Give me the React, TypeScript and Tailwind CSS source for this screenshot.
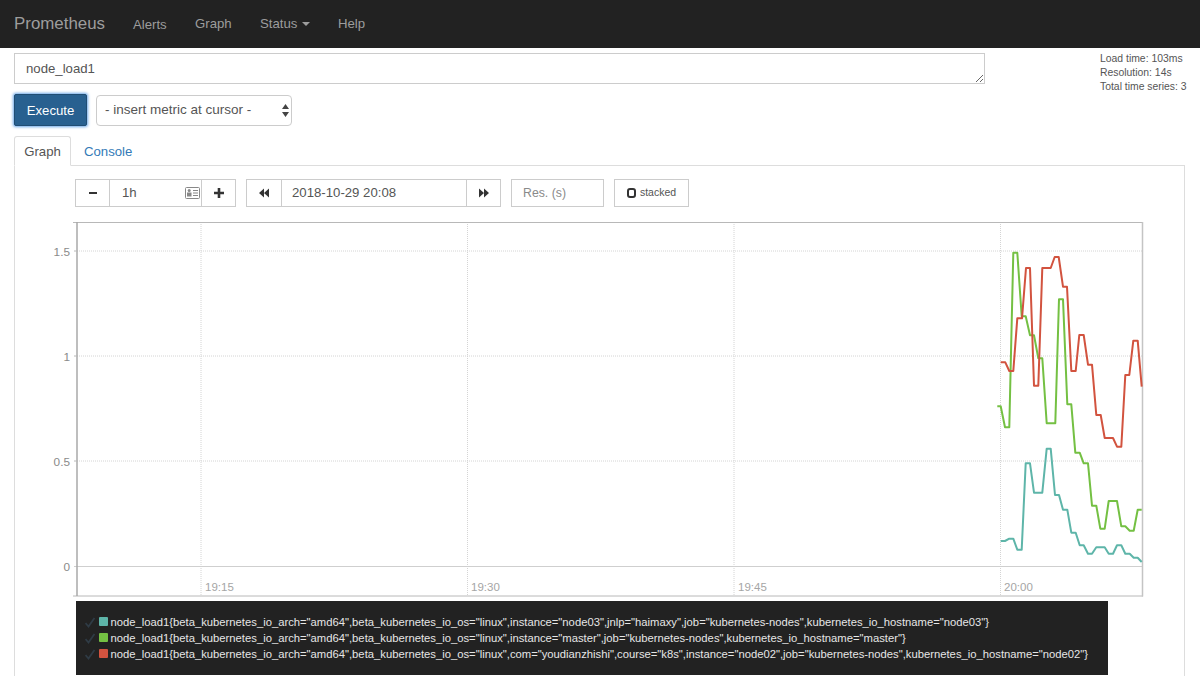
import React from "react";

const red = "1000.7,362.3 1005.3,362.3 1009.3,371 1013.3,371 1017.3,318.3 1022,318.3 1026,268 1030,268 1034,385.7 1038.3,385.7 1042.3,268 1050.7,268 1054.7,257 1058.7,257 1063,286.7 1067,286.7 1071.3,371 1075.7,371 1079.3,335 1083.7,335 1088,364.7 1092,364.7 1096.3,415 1100.7,415 1104.7,438 1113,438 1117,446.7 1121.3,446.7 1125.3,375 1129.3,375 1133.3,340.7 1137.7,340.7 1141.7,386.7";
const green = "997.3,406.3 1000.7,406.3 1005,427.3 1009.3,427.3 1013.3,252.7 1017.3,252.7 1021.7,316.3 1025.7,316.3 1030,335.3 1034,335.3 1038.3,358.3 1042.3,358.3 1046.7,423.3 1055.3,423.3 1059,299.3 1063,299.3 1067.3,404.3 1071.3,404.3 1075.3,452.7 1079.7,452.7 1083.7,463.3 1088,463.3 1092,505.7 1096.3,505.7 1100.3,528.7 1104.7,528.7 1108.7,501 1117,501 1121.3,526.3 1125.3,526.3 1129.7,530.7 1133.7,530.7 1137.7,509.7 1141.7,509.7";
const teal = "1000.7,541 1005,541 1009.3,538.7 1013.3,538.7 1017.3,549.7 1021.7,549.7 1025.7,463.3 1030,463.3 1034,492.7 1042.3,492.7 1046.7,448.7 1050.7,448.7 1055,495 1059,495 1063,509.7 1067.3,509.7 1071.3,532.7 1075.7,532.7 1079.7,545.3 1083.7,545.3 1088,553.7 1092,553.7 1096.3,547.3 1104.7,547.3 1108.7,553.7 1113,553.7 1117,545.3 1121.3,545.3 1125.3,553.7 1129.7,553.7 1133.7,557.7 1137.7,557.7 1141.7,562";

const FONT = { fontFamily: '"Liberation Sans", Arial, sans-serif' };

function Chart() {
  const vx = [201, 467.5, 734, 1000.5];
  const hy: [number, string][] = [
    [251, "1.5"],
    [356, "1"],
    [461, "0.5"],
  ];
  const xl: [number, string][] = [
    [205, "19:15"],
    [471, "19:30"],
    [738, "19:45"],
    [1004, "20:00"],
  ];
  return (
    <svg viewBox="44 214 1110 386" width="1110" height="386" className="block ml-[29px] mt-[7px]" style={FONT}>
      {vx.map((x) => (
        <line key={x} x1={x} x2={x} y1={222} y2={596} stroke="#d4d4d4" strokeWidth="1" strokeDasharray="1 1" />
      ))}
      {hy.map(([y]) => (
        <line key={y} x1={77} x2={1142} y1={y} y2={y} stroke="#d4d4d4" strokeWidth="1" strokeDasharray="1 1" />
      ))}
      <line x1="74" x2="1142" y1="566.5" y2="566.5" stroke="#cfcfcf" strokeWidth="1" />
      <line x1="73" x2="1142" y1="222.5" y2="222.5" stroke="#b8b8b8" strokeWidth="1" />
      <line x1="73" x2="1143" y1="596" y2="596" stroke="#b8b8b8" strokeWidth="1" />
      <line x1="77" x2="77" y1="222" y2="596" stroke="#a8a8a8" strokeWidth="1.5" />
      <line x1="1142.5" x2="1142.5" y1="222" y2="596.5" stroke="#c4c4c4" strokeWidth="1.5" />
      {hy.map(([y]) => (
        <line key={"t" + y} x1={74} x2={77} y1={y} y2={y} stroke="#b8b8b8" />
      ))}
      {hy.map(([y, l]) => (
        <text key={l} x={70} y={y + 4.5} textAnchor="end" fontSize="11.8" fill="#8a8a8a">{l}</text>
      ))}
      <text x={70} y={571} textAnchor="end" fontSize="11.8" fill="#8a8a8a">0</text>
      {xl.map(([x, l]) => (
        <text key={l} x={x} y={591} fontSize="11.5" fill="#a5a5a5">{l}</text>
      ))}
      <polyline points={teal} fill="none" stroke="#5eb5a9" strokeWidth="2" strokeLinejoin="round" />
      <polyline points={green} fill="none" stroke="#74c043" strokeWidth="2" strokeLinejoin="round" />
      <polyline points={red} fill="none" stroke="#d2533f" strokeWidth="2" strokeLinejoin="round" />
    </svg>
  );
}

function Btn({ w, children }: { w: string; children: React.ReactNode }) {
  return (
    <div className={`${w} h-full flex items-center justify-center border border-[#ccc] bg-white text-[#333] -ml-px first:ml-0`}>
      {children}
    </div>
  );
}

function Rows({ color, text }: { color: string; text: string }) {
  return (
    <div className="flex items-center h-[16px] whitespace-nowrap">
      <svg width="10" height="11" viewBox="0 0 10 11" className="mr-[4px] shrink-0">
        <path d="M0.5 6 L3.5 9.5 L9.5 1" fill="none" stroke="#2f3b45" strokeWidth="1.8" />
      </svg>
      <span className={`${color} w-[9px] h-[9px] rounded-[1px] mr-[2.5px] shrink-0 -mt-[2px]`} />
      <span>{text}</span>
    </div>
  );
}

export default function App() {
  return (
    <div className="h-[676px] w-[1200px] overflow-hidden bg-white flex flex-col text-[#555]" style={FONT}>
      <nav className="h-12 shrink-0 bg-[#222] flex items-center text-[#9d9d9d] text-[13.2px] pl-[14px]">
        <span className="text-[16.9px] w-[119px]">Prometheus</span>
        <span className="w-[62px] pt-px">Alerts</span>
        <span className="w-[65px]">Graph</span>
        <span className="w-[78px] flex items-center">
          Status
          <span className="ml-[5px] w-0 h-0 border-x-[4px] border-x-transparent border-t-[4px] border-t-[#9d9d9d]" />
        </span>
        <span>Help</span>
      </nav>

      <main className="flex-1 flex flex-col px-[14px] pt-[5px] min-h-0">
        <div className="flex h-[31px]">
          <textarea
            defaultValue="node_load1"
            className="w-[971px] shrink-0 h-[31px] px-[11px] py-[5px] border border-[#ccc] text-[13.2px] leading-[19px] text-[#555] outline-none resize-y"
          />
          <div className="ml-[115px] -mt-[1px] text-[10.4px] leading-[14px] text-[#555] whitespace-nowrap">
            <div>Load time: 103ms</div>
            <div>Resolution: 14s</div>
            <div>Total time series: 3</div>
          </div>
        </div>

        <div className="flex items-center gap-[9px] mt-[10px]">
          <div className="w-[73px] h-[32px] pt-px flex items-center justify-center bg-[#286090] text-white text-[13.2px] rounded-[2px] border border-[#204d74] shadow-[0_0_3px_1px_#6aa6e8]">
            Execute
          </div>
          <div className="relative w-[196px] h-[31px]">
            <select className="appearance-none w-full h-full pt-px bg-white border border-[#ccc] rounded-[4px] pl-[8px] text-[13.5px] text-[#555] outline-none">
              <option>- insert metric at cursor -</option>
            </select>
            <svg width="7" height="13" viewBox="0 0 7 13" className="absolute right-[3px] top-[9px] pointer-events-none">
              <path d="M3.5 0 L7 5 H0 Z M0 8 H7 L3.5 13 Z" fill="#444" />
            </svg>
          </div>
        </div>

        <div className="flex mt-[10px] text-[13.2px] h-[30px] relative z-10">
          <div className="w-[57px] h-[30px] pt-px bg-white border border-[#ddd] border-b-white rounded-t-[3px] flex items-center justify-center text-[#555]">
            Graph
          </div>
          <div className="ml-[13px] pt-px flex items-center text-[#337ab7]">Console</div>
        </div>

        <div className="flex-1 -mt-px w-[1171px] border border-[#ddd] border-b-0 min-h-0">
          <div className="flex h-[28px] mt-[13px] ml-[60px] text-[13.2px]">
            <div className="flex h-full">
              <Btn w="w-[35px]">
                <span className="w-[8px] h-[2.5px] bg-[#333]" />
              </Btn>
              <div className="w-[93px] h-full -ml-px border border-[#ccc] flex items-center justify-between pl-[12px] pr-[1px]">
                <span>1h</span>
                <svg width="15" height="12" viewBox="0 0 15 12">
                  <rect x="0.5" y="0.5" width="14" height="11" rx="1" fill="none" stroke="#888" />
                  <rect x="2" y="5.5" width="4.5" height="4" fill="#888" />
                  <circle cx="4.2" cy="3.6" r="1.5" fill="#888" />
                  <path d="M8 3.5H13M8 6H13M8 8.5H13" stroke="#888" strokeWidth="1.2" />
                </svg>
              </div>
              <Btn w="w-[35px]">
                <svg width="10" height="10" viewBox="0 0 10 10">
                  <path d="M5 0V10M0 5H10" stroke="#333" strokeWidth="2.6" />
                </svg>
              </Btn>
            </div>
            <div className="flex h-full ml-[10px]">
              <Btn w="w-[36px]">
                <svg width="10" height="10" viewBox="0 0 11 10">
                  <path d="M5.5 0V10L0 5Z M11 0V10L5.5 5Z" fill="#333" />
                </svg>
              </Btn>
              <div className="w-[186px] h-full -ml-px border border-[#ccc] flex items-center pl-[10px]">2018-10-29 20:08</div>
              <Btn w="w-[35px]">
                <svg width="10" height="10" viewBox="0 0 11 10">
                  <path d="M0 0V10L5.5 5Z M5.5 0V10L11 5Z" fill="#333" />
                </svg>
              </Btn>
            </div>
            <div className="w-[93px] h-full ml-[10px] border border-[#ccc] flex items-center pl-[11px] text-[12.3px] text-[#8a8a8a]">Res. (s)</div>
            <div className="w-[75px] h-full ml-[10px] border border-[#ccc] flex items-center justify-center text-[10.5px] text-[#555]">
              <span className="w-[9px] h-[10px] border-2 border-[#333] rounded-[3px] mr-[4px]" />
              stacked
            </div>
          </div>

          <Chart />

          <div className="ml-[61px] mt-px w-[1032px] h-[74px] bg-[#222] text-[#e6e6e6] text-[11.26px] pl-[9px] pt-[13px]">
            <Rows color="bg-[#5eb5a9]" text={'node_load1{beta_kubernetes_io_arch="amd64",beta_kubernetes_io_os="linux",instance="node03",jnlp="haimaxy",job="kubernetes-nodes",kubernetes_io_hostname="node03"}'} />
            <Rows color="bg-[#74c043]" text={'node_load1{beta_kubernetes_io_arch="amd64",beta_kubernetes_io_os="linux",instance="master",job="kubernetes-nodes",kubernetes_io_hostname="master"}'} />
            <Rows color="bg-[#d2533f]" text={'node_load1{beta_kubernetes_io_arch="amd64",beta_kubernetes_io_os="linux",com="youdianzhishi",course="k8s",instance="node02",job="kubernetes-nodes",kubernetes_io_hostname="node02"}'} />
          </div>
        </div>
      </main>
    </div>
  );
}
